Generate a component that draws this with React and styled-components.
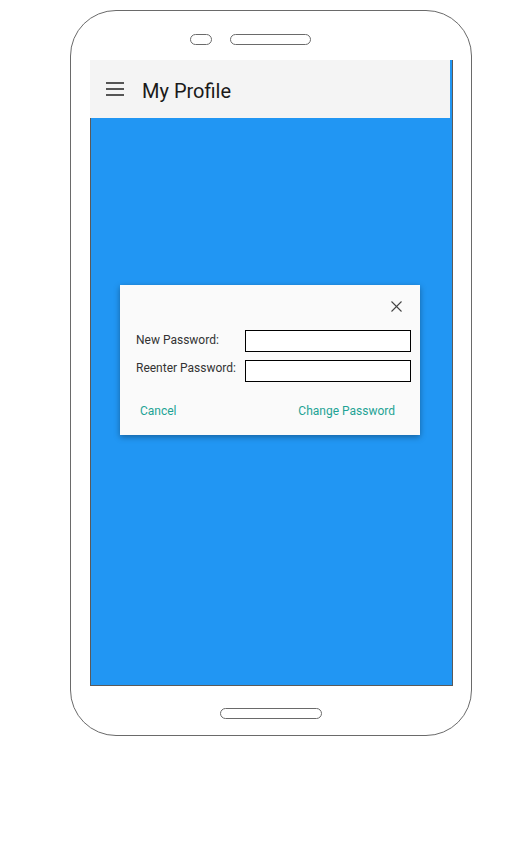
import React from 'react';
import styled, { createGlobalStyle } from 'styled-components';

const GlobalStyle = createGlobalStyle`
  html, body {
    margin: 0;
    padding: 0;
    background: #fff;
    font-family: Roboto, 'Liberation Sans', Arial, sans-serif;
  }
`;

const Page = styled.div`
  width: 521px;
  height: 845px;
  padding: 10px 0 0 70px;
  box-sizing: border-box;
`;

const Phone = styled.div`
  width: 402px;
  height: 726px;
  box-sizing: border-box;
  border: 1px solid #6a6a6a;
  border-radius: 46px;
  display: flex;
  flex-direction: column;
`;

const TopBezel = styled.div`
  height: 49px;
  box-sizing: border-box;
  padding: 23px 0 0 119px;
  display: flex;
  gap: 18px;
  align-items: flex-start;
`;

const Pill = styled.div`
  width: ${(p) => p.$w}px;
  height: 11px;
  box-sizing: border-box;
  border: 1px solid #6a6a6a;
  border-radius: 6px;
`;

const Screen = styled.div`
  margin-left: 19px;
  width: 363px;
  height: 626px;
  box-sizing: border-box;
  background: #2196f3;
  border: 1px solid #5a5a5a;
  border-top: none;
  display: flex;
  flex-direction: column;
`;

const AppBar = styled.div`
  margin-left: -1px;
  width: 360px;
  height: 58px;
  flex-shrink: 0;
  background: #f4f4f4;
  display: flex;
  align-items: center;
  padding-left: 16px;
  box-sizing: border-box;
  gap: 18px;
`;

const Title = styled.div`
  font-size: 20px;
  color: #1a1a1a;
  padding-top: 3px;
`;

const Body = styled.div`
  flex: 1;
  padding: 167px 0 0 29px;
`;

const Dialog = styled.div`
  width: 300px;
  height: 150px;
  box-sizing: border-box;
  background: #fafafa;
  box-shadow: 0 2px 6px rgba(0, 0, 0, 0.35);
  padding: 16px 9px 0 16px;
  display: flex;
  flex-direction: column;
`;

const CloseRow = styled.div`
  display: flex;
  justify-content: flex-end;
  padding-right: 9px;
  height: 11px;
  margin-bottom: 18px;
`;

const Field = styled.div`
  display: flex;
  align-items: center;
  margin-bottom: 8px;
`;

const Label = styled.label`
  width: 109px;
  font-size: 12px;
  color: #333;
  margin-top: ${(p) => p.$lift || -2}px;
`;

const Input = styled.input`
  width: 166px;
  height: 22px;
  box-sizing: border-box;
  border: 1px solid #000;
  background: #fff;
  margin: 0;
  padding: 0 4px;
`;

const Actions = styled.div`
  display: flex;
  justify-content: space-between;
  margin-top: 5px;
  padding-right: 12px;
`;

const TextButton = styled.button`
  border: none;
  background: none;
  font-family: Roboto, 'Liberation Sans', Arial, sans-serif;
  font-size: 12px;
  color: #1ea395;
  padding: 9px 4px;
  cursor: pointer;
`;

const Chin = styled.div`
  flex: 1;
  display: flex;
  justify-content: center;
  padding-top: 22px;
  box-sizing: border-box;
`;

const MenuIcon = () => (
  <svg width="18" height="14" viewBox="0 0 18 14">
    <g stroke="#555" strokeWidth="2">
      <line x1="0" y1="1" x2="18" y2="1" />
      <line x1="0" y1="7" x2="18" y2="7" />
      <line x1="0" y1="13" x2="18" y2="13" />
    </g>
  </svg>
);

const CloseIcon = () => (
  <svg width="11" height="11" viewBox="0 0 11 11">
    <g stroke="#444" strokeWidth="1.1">
      <line x1="0.5" y1="0.5" x2="10.5" y2="10.5" />
      <line x1="10.5" y1="0.5" x2="0.5" y2="10.5" />
    </g>
  </svg>
);

export default function App() {
  return (
    <Page>
      <GlobalStyle />
      <Phone>
        <TopBezel>
          <Pill $w={22} />
          <Pill $w={81} />
        </TopBezel>
        <Screen>
          <AppBar>
            <MenuIcon />
            <Title>My Profile</Title>
          </AppBar>
          <Body>
            <Dialog>
              <CloseRow>
                <CloseIcon />
              </CloseRow>
              <Field>
                <Label>New Password:</Label>
                <Input type="password" />
              </Field>
              <Field>
                <Label $lift={-6}>Reenter Password:</Label>
                <Input type="password" />
              </Field>
              <Actions>
                <TextButton>Cancel</TextButton>
                <TextButton>Change Password</TextButton>
              </Actions>
            </Dialog>
          </Body>
        </Screen>
        <Chin>
          <Pill $w={102} />
        </Chin>
      </Phone>
    </Page>
  );
}
